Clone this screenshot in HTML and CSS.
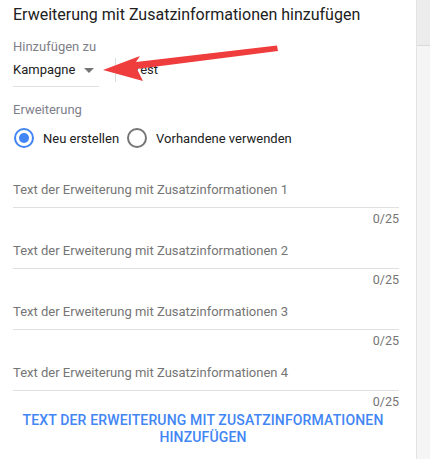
FILE: index.html
```html
<!DOCTYPE html>
<html lang="de">
<head>
    <meta charset="UTF-8">
    <title>Erweiterung hinzufügen</title>
    <link rel="stylesheet" href="styles.css">
</head>
<body>
<div id="page">
    <div id="panel">
        <div class="title">Erweiterung mit Zusatzinformationen hinzufügen</div>

        <div class="label label_first">Hinzufügen zu</div>
        <div class="target_row">
            <div class="dropdown">
                <span>Kampagne</span>
                <span class="caret"></span>
            </div>
            <div class="divider"></div>
            <div class="target_name">Test</div>
        </div>

        <div class="label label_second">Erweiterung</div>
        <div class="radio_row">
            <div class="radio_item">
                <span class="radio checked"></span>
                <span>Neu erstellen</span>
            </div>
            <div class="radio_item">
                <span class="radio"></span>
                <span>Vorhandene verwenden</span>
            </div>
        </div>

        <div class="fields">
            <div class="field">
                <div class="field_input">Text der Erweiterung mit Zusatzinformationen 1</div>
                <div class="counter">0/25</div>
            </div>
            <div class="field">
                <div class="field_input">Text der Erweiterung mit Zusatzinformationen 2</div>
                <div class="counter">0/25</div>
            </div>
            <div class="field">
                <div class="field_input">Text der Erweiterung mit Zusatzinformationen 3</div>
                <div class="counter">0/25</div>
            </div>
            <div class="field">
                <div class="field_input">Text der Erweiterung mit Zusatzinformationen 4</div>
                <div class="counter">0/25</div>
            </div>
        </div>

        <div class="add_button">Text der Erweiterung mit Zusatzinformationen hinzufügen</div>

        <svg class="arrow" width="300" height="100" viewBox="0 0 300 100">
            <polygon fill="#ef3c3c" points="103,70 140,56 136,62 277,45.5 278,51 137,69 143,81"/>
        </svg>
    </div>
    <div id="side">
        <div class="side_top"></div>
    </div>
</div>
</body>
</html>
```

FILE: styles.css
```css
body{
    margin: 0;
    background-color: #fff;
    font-family: Roboto, "Noto Sans", sans-serif;
}
#page{
    display: flex;
    width: 430px;
    height: 459px;
    overflow: hidden;
}
#panel{
    position: relative;
    width: 417px;
    padding: 5px 17px 0 13px;
    box-sizing: border-box;
    border-right: 1px solid #e3e3e3;
}
#side{
    flex: 1;
    background-color: #f5f5f5;
}
.side_top{
    height: 45px;
    background-color: #ececec;
    border-bottom: 1px solid #dadada;
}
.title{
    font-size: 16px;
    line-height: 20px;
    color: #212121;
}
.label{
    font-size: 13px;
    line-height: 16px;
    color: #80808a;
}
.label_first{
    margin-top: 14px;
}
.label_second{
    margin-top: 15px;
}
.target_row{
    display: flex;
    align-items: flex-start;
    margin-top: 3px;
    font-size: 13px;
    color: #212121;
}
.dropdown{
    display: flex;
    align-items: center;
    width: 86px;
    padding: 2px 0 6px;
    line-height: 20px;
    border-bottom: 1px solid #e0e0e0;
}
.caret{
    width: 0;
    height: 0;
    margin-left: 9px;
    margin-top: 1px;
    border-left: 5px solid transparent;
    border-right: 5px solid transparent;
    border-top: 5px solid #757575;
}
.divider{
    width: 1px;
    height: 24px;
    margin-left: 16px;
    background-color: #dadce0;
}
.target_name{
    margin-left: 17px;
    padding-top: 2px;
    line-height: 20px;
}
.radio_row{
    display: flex;
    align-items: center;
    gap: 7px;
    margin-top: 10px;
    font-size: 13px;
    color: #212121;
}
.radio_item{
    display: flex;
    align-items: center;
    gap: 9px;
}
.radio{
    position: relative;
    width: 16px;
    height: 16px;
    margin-left: 1px;
    border: 2px solid #757575;
    border-radius: 50%;
}
.radio.checked{
    border-color: #4285f4;
}
.radio.checked::after{
    content: "";
    position: absolute;
    left: 3px;
    top: 3px;
    width: 10px;
    height: 10px;
    border-radius: 50%;
    background-color: #4285f4;
}
.fields{
    margin-top: 32px;
}
.field{
    margin-bottom: 14px;
}
.field_input{
    font-size: 13px;
    line-height: 20px;
    padding-bottom: 7px;
    color: #757575;
    border-bottom: 1px solid #e0e0e0;
}
.counter{
    margin-top: 3px;
    font-size: 12.5px;
    line-height: 16px;
    color: #757575;
    text-align: right;
}
.add_button{
    margin-top: -12px;
    padding: 0 10px 0 4px;
    font-size: 14px;
    font-weight: 500;
    line-height: 17px;
    letter-spacing: 0.15px;
    color: #4285f4;
    text-transform: uppercase;
    text-align: center;
}
.arrow{
    position: absolute;
    left: 0;
    top: 0;
}
```
